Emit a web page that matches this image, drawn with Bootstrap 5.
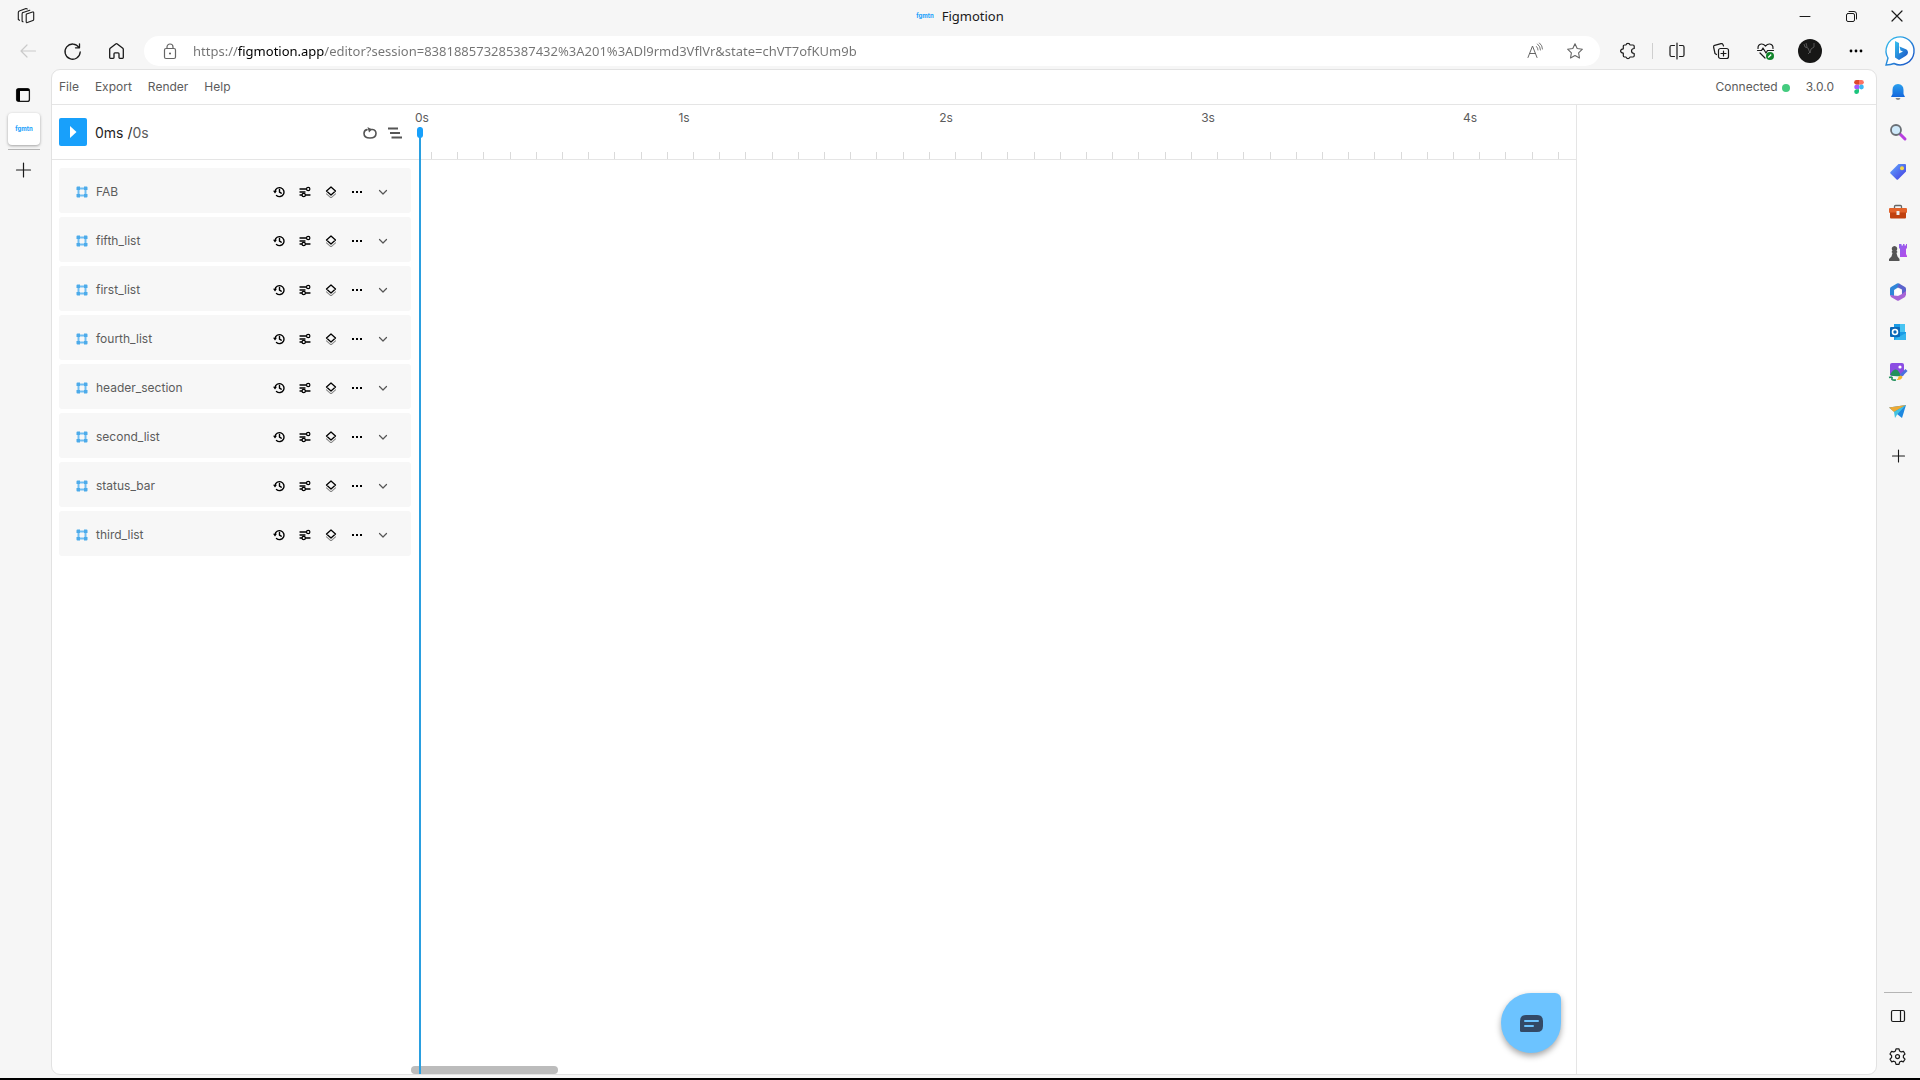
<!DOCTYPE html>
<html lang="en">
<head>
<meta charset="utf-8">
<meta name="viewport" content="width=device-width, initial-scale=1">
<title>Figmotion</title>
<link href="https://cdn.jsdelivr.net/npm/bootstrap@5.3.0/dist/css/bootstrap.min.css" rel="stylesheet">
<style>
  :root { --fm-blue: #18a0fb; --fm-line: #e5e5e5; --fm-text: #5c5c5c; }
  body { font-family: "Noto Sans", "Open Sans", sans-serif; font-size: 13px; line-height: 20px; background: #f6f6f6; color: #1a1a1a; border-bottom: 2px solid #000; }
  svg { display: block; flex: none; overflow: visible; }
  .ln { fill: none; stroke: currentColor; stroke-linecap: round; stroke-linejoin: round; }
  .ln-soft { stroke: #888; }
  .ln-mid { stroke: #555; }
  .bare { border: 0; background: none; padding: 0; color: inherit; display: flex; align-items: center; justify-content: center; flex: none; }
  .titlebar { height: 33px; }
  .titlebar .side { flex: 1 1 0; }
  .win, .tab-title { height: 32px; }
  .win { width: 46px; }
  .win-first { width: 44px; }
  .toolbar { height: 36px; padding-left: 6px; }
  .tool { width: 44px; height: 36px; }
  .tool-wide { width: 46px; height: 36px; }
  .tool-end { width: 41px; height: 36px; }
  .tool-sep { width: 1px; height: 16px; background: #cfcfcf; margin: 0 2px; }
  .address { height: 30px; border-radius: 15px; background: #fff; margin: 0 6px; padding-right: 5px; }
  .address-lock { width: 49px; padding-left: 3px; }
  .url { border: 0; outline: 0; padding: 0; font-size: 13px; line-height: 20px; color: #6e6e6e; -webkit-text-fill-color: transparent; background: linear-gradient(90deg, #737373 45px, #000 45px, #000 131px, #737373 131px); -webkit-background-clip: text; background-clip: text; }
  .addr-btn { width: 40px; height: 28px; color: #666; }
  .rail-left { width: 51px; padding: 10px 5px 0 8px; }
  .rail-left .bare { width: 30px; height: 32px; }
  .rail-left .bare.tab-tile { width: 32px; height: 32px; border-radius: 4px; background: #fff; box-shadow: 0 1px 3px rgba(0,0,0,.35); margin: 2px 0 4px; }
  .tab-line { width: 32px; height: 1px; background: #b5b5b5; margin-bottom: 4px; }
  .logo-text { font-family: Inter, sans-serif; font-size: 6px; line-height: 10px; font-weight: 700; color: var(--fm-blue); }
  .rail-right { width: 43px; padding: 3px 0 2px; }
  .rail-right .bare { width: 41px; height: 40px; margin-right: 2px; }
  .rail-rule { width: 28px; height: 1px; background: #b5b5b5; margin: 0 2px 3px 0; }
  .page { background: #fff; border: 1px solid #e2e2e2; border-radius: 9px; margin-bottom: 3px; overflow: hidden; font-family: Inter, sans-serif; font-size: 12px; line-height: 16px; color: var(--fm-text); }
  .appbar { height: 35px; border-bottom: 1px solid var(--fm-line); padding: 0 12px 1px 7px; }
  .appbar .menus { gap: 16px; }
  .dot { width: 8px; height: 8px; border-radius: 50%; background: #44cb7f; margin-left: 4px; margin-top: 2px; }
  .layers { width: 359px; flex: none; }
  .head { height: 55px; border-bottom: 1px solid var(--fm-line); flex: none; }
  .layers .head { padding: 0 9px 0 7px; }
  .play { width: 28px; height: 28px; background: var(--fm-blue); border-radius: 2px; color: #fff; }
  .time { font-size: 14px; line-height: 20px; margin-left: 8px; padding-top: 2px; }
  .time b { font-weight: 400; color: #1f1f1f; }
  .head-icons { gap: 11px; padding-top: 1px; }
  .layer-list { padding: 8px 0 0 7px; gap: 4px; }
  .layer { height: 45px; background: #f7f7f7; border-radius: 3px; padding: 2px 15px 0 17px; }
  .layer .bare { width: 26px; height: 26px; color: #000; }
  .layer .nm { margin-left: 8px; font-size: 12px; }
  .timeline { min-width: 0; }
  .marks { padding: 5px 95px 0 0; }
  .marks span { width: 22px; text-align: center; }
  .ticks { padding: 0 17px 0 20px; }
  .ticks i { width: 1px; height: 7px; background: #dadada; }
  .playhead { position: absolute; left: 8px; top: 22px; bottom: 0; width: 2px; background: #2a9fe0; }
  .playhead::before { content: ""; position: absolute; left: -2px; top: 0; width: 6px; height: 11px; border-radius: 3px; background: var(--fm-blue); }
  .hscroll { position: absolute; left: 0; bottom: 0; width: 147px; height: 8px; border-radius: 4px; background: #bcbcbc; }
  .chat { position: absolute; right: 15px; bottom: 21px; width: 60px; height: 60px; border-radius: 30px 6px 30px 30px; background: #6cc3ff; box-shadow: 0 3px 6px rgba(0,0,0,.35); }
  .inspector { width: 300px; flex: none; border-left: 1px solid var(--fm-line); }
</style>
<script src="https://cdn.jsdelivr.net/npm/bootstrap@5.3.0/dist/js/bootstrap.bundle.min.js" defer></script>
</head>
<body class="d-flex flex-column vh-100 overflow-hidden">

<svg width="0" height="0" class="position-absolute" aria-hidden="true">
  <symbol id="frame" viewBox="0 0 12 12"><path d="M2.500 2.500h7v7h-7z" fill="none" stroke="#6fbef3" stroke-width="2"/><path d="M.5 1.500q0-1 1-1h2.500V4H.5zM8 .5h2.500q1 0 1 1V4H8zM.5 8H4v3.500H1.500q-1 0-1-1zM8 8h3.500v2.500q0 1-1 1H8z" fill="#4dabea"/></symbol>
  <symbol id="history" viewBox="0 0 12 12"><path class="ln" stroke-width="1.400" d="M2 5.500a4.500 4.500 0 1 1 1.500 4M6.500 3.500v2.700l1.700 1"/><path d="M0 4.800h4L2 7.500z"/></symbol>
  <symbol id="sliders" viewBox="0 0 12 12"><path class="ln" stroke-width="1.300" d="M1 3h6M1 6h5M1 9h2M6.500 9H11"/><circle class="ln" stroke-width="1.200" cx="9.200" cy="3" r="1.700"/><circle class="ln" stroke-width="1.200" cx="4.700" cy="9" r="1.700"/></symbol>
  <symbol id="stack" viewBox="0 0 12 12"><path class="ln" stroke-width="1.300" d="M6 1l4.500 4L6 9 1.500 5z"/><path class="ln ln-soft" stroke-width="1.100" d="M1.500 7.800L6 11.800l4.500-4"/></symbol>
  <symbol id="more" viewBox="0 0 12 12"><path d="M1 5h2v2H1zM5 5h2v2H5zM9 5h2v2H9z"/></symbol>
  <symbol id="down" viewBox="0 0 12 12"><path class="ln ln-mid" stroke-width="1.200" d="M2.500 4.500L6 8l3.500-3.500"/></symbol>
  <linearGradient id="gb" x1="0" y1="0" x2="1" y2="1"><stop offset="0" stop-color="#35c3f0"/><stop offset="1" stop-color="#1b4fc4"/></linearGradient>
  <linearGradient id="gbell" x1="0" y1="0" x2="0" y2="1"><stop offset="0" stop-color="#2aa0ee"/><stop offset="1" stop-color="#1466dc"/></linearGradient>
  <linearGradient id="gtag" x1="0" y1="0" x2="1" y2="1"><stop offset="0" stop-color="#62aaff"/><stop offset="1" stop-color="#4338e0"/></linearGradient>
  <linearGradient id="gpur" x1="0" y1="0" x2="1" y2="1"><stop offset="0" stop-color="#8a63ee"/><stop offset="1" stop-color="#b84ae8"/></linearGradient>
</svg>

<header>
  <div class="titlebar d-flex align-items-start">
    <div class="side d-flex"><button class="bare win win-first ms-1" aria-label="Workspaces"><svg width="18" height="18" viewBox="0 0 18 18"><path class="ln" stroke-width="1.100" d="M9.500 7l6-2q1.200-.3 1.200.8v6.700q0 .8-.8 1.100l-5.500 2q-1.200.4-1.200-.8V8q0-.8.3-1zM6 14.800l-.9-.5V7q0-1.300 1-1.600l6.700-2.200M2.500 13.300l-1.200-.8V5.500q0-1.200 1-1.600L9 1.500l1.300.5"/></svg></button></div>
    <div class="tab-title d-flex align-items-center"><span class="logo-text me-2" aria-hidden="true">fgmtn</span><span>Figmotion</span></div>
    <div class="side d-flex justify-content-end">
      <button class="bare win" aria-label="Minimize"><svg width="10" height="10"><path class="ln" d="M0 5.500h10"/></svg></button>
      <button class="bare win" aria-label="Restore"><svg width="11" height="11"><rect class="ln" x=".5" y="2.500" width="8" height="8" rx="1.500"/><path class="ln" d="M3 .5h5q2.500 0 2.500 2.500v5"/></svg></button>
      <button class="bare win" aria-label="Close"><svg width="10" height="10"><path class="ln" stroke-width="1.200" d="M0 0l10 10M10 0L0 10"/></svg></button>
    </div>
  </div>
  <div class="toolbar d-flex align-items-center">
    <button class="bare tool" aria-label="Back"><svg width="16" height="14" color="#cacaca"><path class="ln" stroke-width="1.200" d="M15.500 7H1M7 1L1 7l6 6"/></svg></button>
    <button class="bare tool" aria-label="Refresh"><svg width="17" height="17"><path class="ln" stroke-width="1.300" d="M15 4.500A7.600 7.600 0 1 0 16.200 9M15.500.8v4h-4"/></svg></button>
    <button class="bare tool" aria-label="Home"><svg width="15" height="16"><path class="ln" stroke-width="1.300" d="M.7 6.300Q.7 5.800 1.200 5.300L6.700.9q.8-.6 1.600 0l5.500 4.400q.5.500.5 1v8.200q0 .8-.8.800h-2.700q-.8 0-.8-.8v-3.700q0-1-1-1H6q-1 0-1 1v3.700q0 .8-.8.800H1.500q-.8 0-.8-.8z"/></svg></button>
    <div class="address d-flex align-items-center flex-grow-1">
      <button class="bare address-lock" aria-label="Site information"><svg width="12" height="15" color="#666"><rect class="ln" stroke-width="1.200" x=".5" y="4.500" width="11" height="10" rx="1.500"/><path class="ln" stroke-width="1.200" d="M3 4.500V3a3 3 0 0 1 6 0v1.500"/><circle cx="6" cy="9.500" r="1" fill="#555"/></svg></button>
      <input class="url flex-grow-1" type="text" aria-label="Address" spellcheck="false" value="https://figmotion.app/editor?session=838188573285387432%3A201%3ADl9rmd3VflVr&amp;state=chVT7ofKUm9b">
      <button class="bare addr-btn" aria-label="Read aloud"><svg width="16" height="16"><path class="ln" d="M1 14.500L5.500 3 10 14.500M2.500 10.500h6"/><path class="ln" stroke-width=".9" d="M9.500 3.500q1.500 1.500 1.500 3.500M10.500 1q3 2.500 3 6M12.500 0q3 2.500 3 6"/></svg></button>
      <button class="bare addr-btn" aria-label="Add to favorites"><svg width="16" height="16"><path class="ln" stroke-width="1.100" d="M8 .8l2.200 4.700 5.200.7-3.800 3.600.9 5.200L8 12.500 3.500 15l.9-5.200L.6 6.200l5.200-.7z"/></svg></button>
    </div>
    <button class="bare tool" aria-label="Extensions"><svg width="16" height="16"><path class="ln" stroke-width="1.200" d="M4.500 2H6q.3-1.600 2-1.600T10 2h3q1.200 0 1.200 1.200v2.300q-2.700.2-2.700 2.500t2.700 2.500v2.300q0 1.200-1.200 1.200h-3q-.3 1.600-2 1.600T6 14H4.500q-1.200 0-1.200-1.200V10.200Q.6 9.800.6 8t2.700-2.200V3.200Q3.300 2 4.500 2z"/></svg></button>
    <span class="tool-sep"></span>
    <button class="bare tool" aria-label="Split screen"><svg width="16" height="16"><path class="ln" stroke-width="1.200" d="M8 0v16M5.500 2.500H2.500q-1.500 0-1.500 1.500v8q0 1.500 1.500 1.500h3M10.500 2.500h3q1.500 0 1.500 1.500v8q0 1.500-1.500 1.500h-3"/></svg></button>
    <button class="bare tool" aria-label="Collections"><svg width="16" height="16"><rect class="ln" stroke-width="1.200" x="5.500" y="5.500" width="10" height="10" rx="2"/><path class="ln" stroke-width="1.200" d="M10.500 8v5M8 10.500h5M3.500 11.500L2 10.500.6 4Q.4 2.700 1.600 2.300L8 .6q1.500-.3 2 1l.5 1.400"/></svg></button>
    <button class="bare tool" aria-label="Browser essentials"><svg width="17" height="17"><path class="ln" stroke-width="1.200" d="M1 5.500Q.8 1.500 4.300 1 6.500.8 8.500 3q2-2.200 4.300-2 3.400.5 3.200 4.500M.5 7.500h4L6 5l3 5 1.500-2.500h6M3 10l5 5"/><circle cx="13" cy="13" r="4" fill="#12852b"/><path d="M11.200 14.500l3-3" stroke="#fff" stroke-width="1.300"/></svg></button>
    <button class="bare tool-wide" aria-label="Profile"><svg width="24" height="24"><circle cx="12" cy="12" r="12" fill="#171716"/><path fill="none" stroke="#666" stroke-width=".8" d="M6 5q0 4 4 4l2 5 1-4 3-2V4M8 4l1 4M10 15l2-2"/></svg></button>
    <button class="bare tool-wide" aria-label="Settings and more"><svg width="14" height="4"><circle cx="2" cy="2" r="1.400"/><circle cx="7" cy="2" r="1.400"/><circle cx="12" cy="2" r="1.400"/></svg></button>
    <button class="bare tool-end" aria-label="Bing Chat"><svg width="30" height="30"><path d="M1 29l2-7A14 14 0 1 1 9 27.500q-3 1.300-8 1.500z" fill="#fff" stroke="url(#gb)" stroke-width="1.400"/><path d="M10 5l4 2v10.500l4-2-2.500-1-1-4 7 3q1.500 1 1.500 3t-2 3.300L14 24l-4-2.500z" fill="url(#gb)"/></svg></button>
  </div>
</header>

<div class="d-flex flex-grow-1" style="min-height:0">
  <nav class="rail-left d-flex flex-column flex-shrink-0" aria-label="Tabs">
    <button class="bare" aria-label="Tab actions"><svg width="14" height="14"><rect class="ln" stroke-width="1.300" x=".6" y=".6" width="12.800" height="12.800" rx="2"/><path d="M1 1h3v12H1zM1 1h12v2H1z"/></svg></button>
    <button class="bare tab-tile" aria-label="Figmotion tab"><span class="logo-text" aria-hidden="true">fgmtn</span></button>
    <span class="tab-line"></span>
    <button class="bare" aria-label="New tab"><svg width="14" height="14"><path class="ln" stroke-width="1.200" d="M7.500 0v14M.5 7h14"/></svg></button>
  </nav>

  <main class="page d-flex flex-column flex-grow-1">
    <div class="appbar d-flex align-items-center justify-content-between flex-shrink-0">
      <div class="menus d-flex">
        <button class="bare">File</button><button class="bare">Export</button><button class="bare">Render</button><button class="bare">Help</button>
      </div>
      <div class="d-flex align-items-center">
        <span>Connected</span><span class="dot"></span><span class="ms-3">3.0.0</span>
        <a href="#" class="ms-3 ps-1" aria-label="Figma"><svg width="10" height="14" viewBox="0 0 10 14"><path d="M2.500 0H5v4.700H2.500a2.300 2.300 0 0 1 0-4.700z" fill="#e0472b"/><path d="M5 0h2.500a2.300 2.300 0 0 1 0 4.700H5z" fill="#ff7262"/><path d="M2.500 4.700H5v4.600H2.500a2.300 2.300 0 0 1 0-4.600z" fill="#a259ff"/><circle cx="7.400" cy="7" r="2.400" fill="#3db8f5"/><path d="M2.500 9.300H5v2.300a2.400 2.400 0 1 1-2.500-2.300z" fill="#1bc47d"/></svg></a>
      </div>
    </div>

    <div class="d-flex flex-grow-1" style="min-height:0">
      <section class="layers d-flex flex-column">
        <div class="head d-flex align-items-center">
          <button class="bare play" aria-label="Play"><svg width="8" height="12"><path d="M1 0l6.500 6L1 12z" fill="#fff"/></svg></button>
          <span class="time"><b>0ms /</b>0s</span>
          <div class="head-icons d-flex ms-auto">
            <button class="bare" aria-label="Loop"><svg width="14" height="12"><path class="ln ln-mid" stroke-width="1.600" d="M4 2.600Q1 3.300 1 6.500 1 11 7 11t6-4.500Q13 3 9.500 2.500H6.500"/><path d="M4.500 0L9 2.500 6 5.500z" fill="#555"/></svg></button>
            <button class="bare" aria-label="Easing"><svg width="14" height="12"><path d="M0 1.500h10M2 6h10M3.500 10.500H14" stroke="#555" stroke-width="2.200"/></svg></button>
          </div>
        </div>
        <div class="layer-list d-flex flex-column" id="layers"></div>
      </section>

      <section class="timeline d-flex flex-column flex-grow-1 position-relative">
        <div class="head d-flex flex-column justify-content-between">
          <div class="marks d-flex justify-content-between"><span>0s</span><span>1s</span><span>2s</span><span>3s</span><span>4s</span></div>
          <div class="ticks d-flex justify-content-between" id="ticks"></div>
        </div>
        <div class="hscroll"></div>
        <div class="playhead"></div>
        <button class="bare chat" aria-label="Open chat"><svg width="23" height="17"><path d="M6 0h11q6 0 6 6v5q0 6-6 6H1.500Q0 17 0 15.500V6q0-6 6-6z" fill="#334966"/><path d="M5 6h13M5 11h8" stroke="#6cc3ff" stroke-width="2" stroke-linecap="round"/></svg></button>
      </section>

      <aside class="inspector" aria-label="Properties"></aside>
    </div>
  </main>

  <nav class="rail-right d-flex flex-column align-items-center flex-shrink-0" aria-label="Sidebar">
    <button class="bare" aria-label="Notifications"><svg width="16" height="16"><path d="M8 0q5.500.3 5.500 6v4l1.500 3H1l1.500-3V6Q2.500.3 8 0z" fill="url(#gbell)"/><path d="M5.500 14h5Q10 16 8 16t-2.500-2z" fill="#888"/></svg></button>
    <button class="bare" aria-label="Search"><svg width="16" height="16"><path d="M10 10l5 5" stroke="#b83fe0" stroke-width="3" stroke-linecap="round"/><circle cx="6" cy="6" r="5" fill="#cfeafb" stroke="#6a6f75" stroke-width="1.800"/></svg></button>
    <button class="bare" aria-label="Shopping"><svg width="16" height="16"><path d="M8.500 0H15q1 0 1 1v6.500L8 15.500q-.7.7-1.400 0L.5 9.500q-.7-.7 0-1.400z" fill="url(#gtag)"/><circle cx="12" cy="4.300" r="2" fill="#f5d64a"/></svg></button>
    <button class="bare" aria-label="Tools"><svg width="18" height="14"><path d="M5.500 3V1.500q0-1 1-1h5q1 0 1 1V3" fill="none" stroke="#666" stroke-width="1.300"/><rect y="3" width="18" height="5" rx="1" fill="#e2622a"/><path d="M1 7.500h16v5q0 1-1 1H2q-1 0-1-1z" fill="#c0410f"/><rect x="7.500" y="6" width="3" height="4" rx=".5" fill="#eee"/></svg></button>
    <button class="bare" aria-label="Games"><svg width="18" height="17"><path d="M11 0h1.500v1.500H14V0h1.500v1.500H17V0h1v4l-1 1v5l1 2v1h-7v-8l-1-1V0z" fill="url(#gpur)"/><path d="M5.500 2a2.700 2.700 0 0 1 2 4.500L8.500 8 7.500 9l1 3.500 2 2.500v2H0v-2l2.500-2.500L3.500 9l-1-1 1-1.500a2.700 2.700 0 0 1 2-4.500z" fill="#555"/></svg></button>
    <button class="bare" aria-label="Microsoft 365"><svg width="16" height="18"><path d="M7 .5L1 4q-1 .6-1 2v6l4 1.500V7l7-4.500L9 .5q-1-.6-2 0z" fill="#2f86d8"/><path d="M9 .5l6 3.500q1 .6 1 2v6l-4 1V6.500L7 4z" fill="#5b63cc"/><path d="M0 12l1 2 6 3.500q1 .6 2 0l6-3.500 1-2.500V8l-4 3-4 2z" fill="#a764d6"/><circle cx="8" cy="9" r="3" fill="#fff"/></svg></button>
    <button class="bare" aria-label="Outlook"><svg width="16" height="16"><path d="M4 0h11v8h1v8H4z" fill="#1a9be5"/><path d="M10 0h5v8h-5z" fill="#48c4f2"/><path d="M5 15l11-6v7H5z" fill="#35b5ee"/><rect y="3" width="10" height="10" rx="1" fill="#0a68b8"/><circle cx="5" cy="8" r="2.500" fill="none" stroke="#fff" stroke-width="1.600"/></svg></button>
    <button class="bare" aria-label="Image Creator"><svg width="18" height="18"><rect x="1" width="14" height="13" rx="2" fill="#8b4de3"/><path d="M1 12q5-9 9-3l2 4q-6 1-11-1z" fill="#22905b"/><circle cx="11" cy="4" r="1.600" fill="#fff"/><path d="M0 14.500q4-1 3 1t4 1.500" fill="none" stroke="#22905b" stroke-width="1.600"/><path d="M17.500 7l-6 6" stroke="#4b71dd" stroke-width="3"/><path d="M12 12.500q-3 .5-3 3L7.500 17q5 .5 6-3z" fill="#f5b52a"/></svg></button>
    <button class="bare" aria-label="Drop"><svg width="17" height="14"><path d="M0 2.500L17 0l-4 13-5-4z" fill="#1e88e0"/><path d="M0 2.500L17 0 5 7z" fill="#ecaa35"/><path d="M5 7L17 0 8.500 9 6 13z" fill="#45c3df"/></svg></button>
    <button class="bare mt-1" aria-label="Customize"><svg width="12" height="12"><path class="ln" stroke-width="1.100" d="M6.500 0v12M.5 6h12"/></svg></button>
    <span class="rail-rule mt-auto"></span>
    <button class="bare" aria-label="Hide sidebar"><svg width="14" height="12"><rect class="ln" stroke-width="1.200" x=".5" y=".5" width="13" height="11" rx="1.500"/><path class="ln" stroke-width="1.200" d="M9.500.5v11"/></svg></button>
    <button class="bare" aria-label="Settings"><svg width="17" height="17" viewBox="0 0 17 17"><path class="ln" stroke-width="1.200" d="M7 .8h3l.6 2.200 1.600.9 2.200-.6 1.600 2.700-1.600 1.700v1.800l1.600 1.600-1.600 2.700-2.200-.6-1.600.9-.6 2.200H7l-.6-2.200-1.600-.9-2.200.6L1 11.100l1.600-1.600V7.700L1 6l1.600-2.700 2.200.6L6.400 3z"/><circle class="ln" stroke-width="1.200" cx="8.500" cy="8.600" r="2"/></svg></button>
  </nav>
</div>

<script>
  const icon = (id) => `<svg width="12" height="12"><use href="#${id}"/></svg>`;
  const actions = [["history", "History"], ["sliders", "Properties"], ["stack", "Keyframes"], ["more", "More"], ["down", "Expand"]];
  const names = ["FAB", "fifth_list", "first_list", "fourth_list", "header_section", "second_list", "status_bar", "third_list"];
  document.getElementById("layers").innerHTML = names.map((n) =>
    `<div class="layer d-flex align-items-center">${icon("frame")}<span class="nm me-auto">${n}</span>` +
    actions.map(([id, label]) => `<button class="bare" aria-label="${label}: ${n}">${icon(id)}</button>`).join("") + `</div>`).join("");
  document.getElementById("ticks").innerHTML = "<i></i>".repeat(44);
</script>
</body>
</html>
